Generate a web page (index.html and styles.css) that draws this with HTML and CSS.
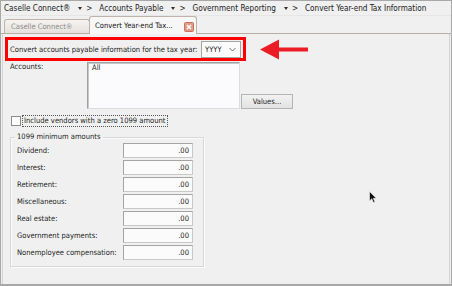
FILE: index.html
```html
<!DOCTYPE html>
<html>
<head>
<meta charset="utf-8">
<title>Convert Year-end Tax Information</title>
<link rel="stylesheet" href="styles.css">
</head>
<body>
<div class="window">
  <div class="crumbs">
    <span class="crumb">Caselle Connect®</span>
    <span class="sep"><span class="dd"></span><span class="gt">&gt;</span></span>
    <span class="crumb">Accounts Payable</span>
    <span class="sep"><span class="dd"></span><span class="gt">&gt;</span></span>
    <span class="crumb">Government Reporting</span>
    <span class="sep"><span class="dd"></span><span class="gt">&gt;</span></span>
    <span class="crumb">Convert Year-end Tax Information</span>
  </div>
  <div class="tabs">
    <div class="tab inactive">Caselle Connect®</div>
    <div class="tab active">
      <span>Convert Year-end Tax...</span>
      <svg class="close" width="10" height="10" viewBox="0 0 10 10">
        <rect x="0.5" y="0.5" width="9" height="9" rx="1" fill="#e39a86" stroke="#c8735f"/>
        <path d="M3 3 L7 7 M7 3 L3 7" stroke="#ffffff" stroke-width="1.5"/>
      </svg>
    </div>
  </div>
  <div class="panel">
    <div class="year-line">
      <div class="highlight">
        <span class="year-label">Convert accounts payable information for the tax year:</span>
        <div class="select">
          <span>YYYY</span>
          <svg width="7" height="5" viewBox="0 0 7 5"><path d="M0.5 1 L3.5 4 L6.5 1" fill="none" stroke="#707070" stroke-width="1"/></svg>
        </div>
      </div>
      <svg class="arrow" width="48" height="21" viewBox="0 0 48 21">
        <polygon points="0,10.5 19,0.5 19,20.5" fill="#ec1c24"/>
        <rect x="18" y="8.5" width="30" height="4" fill="#ec1c24"/>
      </svg>
    </div>
    <div class="accounts">
      <span class="acc-label">Accounts:</span>
      <div class="listbox">All</div>
      <div class="btn">Values...</div>
    </div>
    <div class="check">
      <span class="box"></span>
      <span class="focus">Include vendors with a zero 1099 amount</span>
    </div>
    <fieldset class="group">
      <legend>1099 minimum amounts</legend>
      <div class="amounts">
        <span class="lbl">Dividend:</span><div class="amt">.00</div>
        <span class="lbl">Interest:</span><div class="amt">.00</div>
        <span class="lbl">Retirement:</span><div class="amt">.00</div>
        <span class="lbl">Miscellaneous:</span><div class="amt">.00</div>
        <span class="lbl">Real estate:</span><div class="amt">.00</div>
        <span class="lbl">Government payments:</span><div class="amt">.00</div>
        <span class="lbl">Nonemployee compensation:</span><div class="amt">.00</div>
      </div>
    </fieldset>
  </div>
  <svg class="cursor" width="9" height="13" viewBox="0 0 9 13">
    <path d="M0.5 0.5 L0.5 10 L2.8 7.8 L4.4 11.5 L5.9 10.9 L4.3 7.3 L7.3 7.3 Z" fill="#111111" stroke="#f0f0f0" stroke-width="0.6"/>
  </svg>
</div>
</body>
</html>
```

FILE: styles.css
```css
* { box-sizing: border-box; }
html, body { margin: 0; padding: 0; }
body {
  width: 452px;
  height: 286px;
  overflow: hidden;
  background: #f0f0f0;
  font-family: "DejaVu Sans Condensed", "DejaVu Sans", sans-serif;
  font-stretch: condensed;
  font-size: 7.55px;
  color: #1c1c1c;
}
.window {
  position: relative;
  width: 452px;
  height: 286px;
  border: 1px solid #a8a8a8;
  border-bottom-width: 2px;
  display: flex;
  flex-direction: column;
  background: #f0f0f0;
}
.crumbs {
  height: 15px;
  display: flex;
  align-items: center;
  padding-left: 3px;
  border-bottom: 1px solid #e6e6e6;
  white-space: nowrap;
  font-size: 8.15px;
  color: #202020;
}
.sep { display: inline-flex; align-items: center; margin: 0 7px 0 8px; }
.dd {
  width: 0; height: 0;
  border-left: 2.5px solid transparent;
  border-right: 2.5px solid transparent;
  border-top: 3px solid #303030;
  margin-right: 4px;
}
.gt { font-size: 8px; }
.tabs {
  height: 18px;
  display: flex;
  align-items: flex-end;
  padding-left: 3px;
  border-bottom: 1px solid #b9aea6;
  background: #f0f0f0;
}
.tab {
  display: flex;
  align-items: center;
  border: 1px solid #bcb3ab;
  border-bottom: none;
  border-radius: 3px 3px 0 0;
  white-space: nowrap;
}
.tab.inactive {
  width: 86px;
  height: 14px;
  padding-left: 6px;
  color: #8a8a8a;
  background: linear-gradient(#f6f3f0, #e6e1dc);
}
.tab.active {
  width: 108px;
  height: 18px;
  margin-bottom: -1px;
  margin-left: -1px;
  padding: 0 2px 0 5px;
  background: #f7f7f7;
  justify-content: space-between;
  color: #151515;
}
.close { display: block; margin-top: 2px; }
.panel {
  flex: 1;
  margin: 0 1px 0 1px;
  border-left: 1px solid #d4d4d4;
  border-right: 1px solid #d4d4d4;
  padding: 3px 0 0 0;
  display: flex;
  flex-direction: column;
}
.year-line { display: flex; align-items: center; gap: 14px; padding-left: 2px; }
.highlight {
  width: 241px;
  height: 24px;
  border: 3px solid #ff0000;
  display: flex;
  align-items: center;
  padding: 0 2px 0 2px;
}
.year-label { white-space: nowrap; }
.select {
  margin-left: auto;
  width: 40px;
  height: 17px;
  border: 1px solid #a5a5a5;
  background: #fbfbfb;
  display: flex;
  align-items: center;
  justify-content: space-between;
  padding: 0 4px 0 3px;
}
.accounts { display: flex; align-items: flex-start; margin-top: 1px; padding-left: 7px; }
.acc-label { width: 77px; padding-top: 0; line-height: 10px; }
.listbox {
  width: 153px;
  height: 47px;
  border: 1px solid #a0a0a0;
  border-right-color: #dcdcdc;
  border-bottom-color: #dcdcdc;
  box-shadow: inset 1px 1px 0 #c8c8c8;
  background: #fbfbfd;
  padding: 0 4px;
  line-height: 10px;
}
.btn {
  align-self: flex-end;
  width: 52px;
  height: 15px;
  margin-left: 1px;
  border: 1px solid #b4b4b4;
  background: linear-gradient(#f2f2f2, #e2e2e2);
  display: flex;
  align-items: center;
  justify-content: center;
  color: #1c1c1c;
}
.check { display: flex; align-items: center; margin-top: 6px; padding-left: 8px; }
.box {
  width: 10px;
  height: 10px;
  border: 1px solid #8c8c8c;
  background: #fdfdfd;
  margin-right: 1px;
}
.focus {
  border: 1px dotted #555555;
  padding: 0 1px;
  line-height: 10px;
}
.group {
  width: 194px;
  margin: 5px 0 0 7px;
  padding: 1px 9px 6px 6px;
  border: 1px solid #d8d8d8;
  box-shadow: inset 1px 1px 0 #fbfbfb, 1px 1px 0 #fbfbfb;
}
.group legend {
  padding: 0 2px;
  margin-left: -2px;
  line-height: 10px;
}
.amounts {
  display: grid;
  grid-template-columns: 106px 70px;
  grid-auto-rows: 15px;
  row-gap: 2px;
  align-items: center;
}
.lbl { white-space: nowrap; }
.amt {
  height: 15px;
  border: 1px solid #a4a4a4;
  border-right-color: #c8c8c8;
  border-bottom-color: #c8c8c8;
  background: #fbfbfb;
  text-align: right;
  padding-right: 3px;
  line-height: 13px;
}
.cursor { position: absolute; left: 368px; top: 190px; }
```
